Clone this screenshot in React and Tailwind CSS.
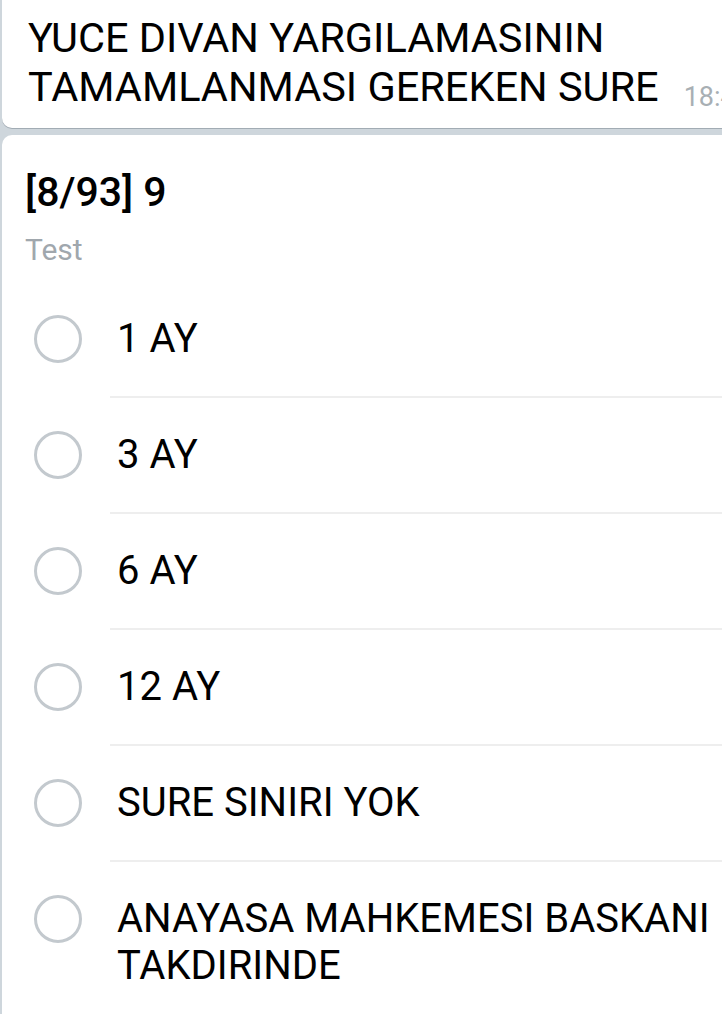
const options = [
  '1 AY',
  '3 AY',
  '6 AY',
  '12 AY',
  'SURE SINIRI YOK',
  'ANAYASA MAHKEMESI BASKANI TAKDIRINDE',
];

function OptionRow({ label }) {
  return (
    <div className="flex items-start">
      <div className="pl-[32px] pt-[33px] shrink-0">
        <div className="w-12 h-12 rounded-full border-[3px] border-[#c3c9ce]" />
      </div>
      <div className="ml-[28px] flex-1 border-b-2 border-[#eeeeee] pt-[33px] pb-[34px] pl-[7px]">
        <div className="text-[40px] leading-[47px] text-black w-[600px]">{label}</div>
      </div>
    </div>
  );
}

export default function App() {
  return (
    <div className="w-[722px] h-[1014px] overflow-hidden bg-[#ced6dc] font-['Roboto',sans-serif]">
      {/* question bubble */}
      <div className="ml-[2px] w-[780px] h-[128px] bg-white rounded-b-[10px] shadow-[0_1px_0_#a2acb4] pt-[13px] pl-[26px]">
        <div className="text-[41.5px] leading-[49px] text-black whitespace-nowrap">
          YUCE DIVAN YARGILAMASININ
          <br />
          TAMAMLANMASI GEREKEN SURE
          <span className="ml-[25px] text-[27px] text-[#a8afb4] align-[-5px]">18:42</span>
        </div>
      </div>

      {/* poll bubble */}
      <div className="mt-[7px] ml-[2px] w-[780px] bg-white rounded-t-[10px] pt-[33px]">
        <div className="pl-[23px]">
          <div className="text-[41px] leading-[49px] font-medium text-black">[8/93] 9</div>
          <div className="mt-[15px] text-[30px] leading-[36px] text-[#a0a7ad]">Test</div>
        </div>
        <div className="mt-[14px]">
          {options.map((o) => (
            <OptionRow key={o} label={o} />
          ))}
        </div>
      </div>
    </div>
  );
}
